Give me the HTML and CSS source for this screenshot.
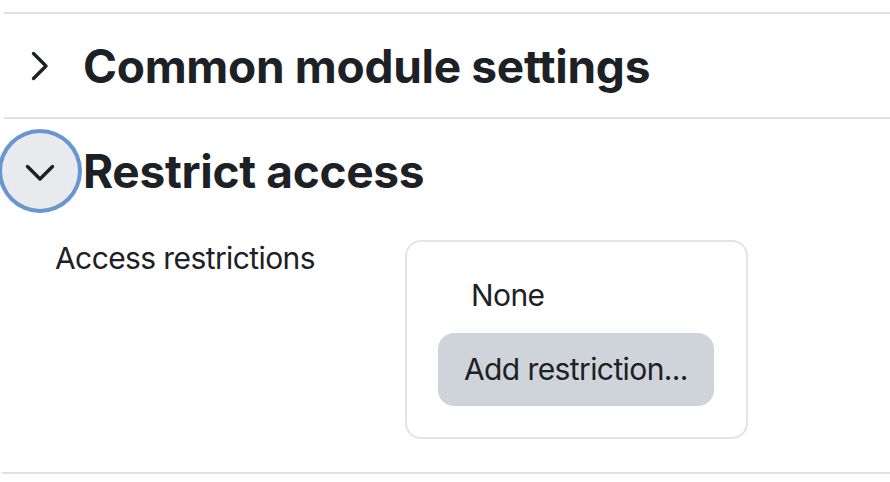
FILE: index.html
```html
<!DOCTYPE html>
<html lang="en">
<head>
<meta charset="utf-8">
<title>Restrict access</title>
<link rel="stylesheet" href="styles.css">
</head>
<body>
<div class="page">
  <div class="divider"></div>
  <div class="sec-head">
    <div class="toggle">
      <svg class="chev" width="18" height="30" viewBox="0 0 18 30" aria-hidden="true">
        <path d="M2.5 2.5 L15 15 L2.5 27.5" fill="none" stroke="#1d2125" stroke-width="3.4" stroke-linecap="round" stroke-linejoin="round"/>
      </svg>
    </div>
    <h3 class="sec-title">Common module settings</h3>
  </div>
  <div class="divider"></div>
  <div class="sec-head">
    <div class="toggle">
      <span class="toggle-btn">
        <svg width="30" height="18" viewBox="0 0 30 18" aria-hidden="true">
          <path d="M2.5 2.5 L15 15 L27.5 2.5" fill="none" stroke="#1d2125" stroke-width="3.4" stroke-linecap="round" stroke-linejoin="round"/>
        </svg>
      </span>
    </div>
    <h3 class="sec-title">Restrict access</h3>
  </div>
  <div class="form-row">
    <div class="form-label">Access restrictions</div>
    <div class="avail-box">
      <div class="avail-none">None</div>
      <button class="add-btn" type="button">Add restriction...</button>
    </div>
  </div>
  <div class="divider divider-bottom"></div>
</div>
</body>
</html>
```

FILE: styles.css
```css
html, body {
  margin: 0;
  padding: 0;
  background: #ffffff;
}

body {
  font-family: Inter, "Noto Sans", "Liberation Sans", sans-serif;
  color: #1d2125;
  font-size: 30px;
  line-height: 45px;
  letter-spacing: -0.6px;
}

.page {
  padding-top: 12px;
  overflow: hidden;
}

.divider {
  height: 2px;
  background: #dee2e6;
  margin-left: 4px;
}

.divider-bottom {
  margin-left: 2px;
}

.sec-head {
  display: flex;
  align-items: center;
  height: 103px;
}

.toggle {
  width: 80px;
  flex: none;
  display: flex;
  justify-content: center;
  align-items: center;
  margin-right: 3px;
}

.chev {
  display: block;
}

.toggle-btn {
  width: 76px;
  height: 76px;
  border-radius: 50%;
  background: #e9eaee;
  box-shadow: 0 0 0 4px #6995d1;
  display: flex;
  justify-content: center;
  align-items: center;
  padding-top: 4px;
  box-sizing: border-box;
}

.toggle-btn svg {
  display: block;
}

.sec-title {
  margin: 0;
  font-size: 46px;
  font-weight: 700;
  line-height: 54px;
  letter-spacing: -0.3px;
  color: #1d2125;
}

.form-row {
  display: flex;
  padding-top: 18px;
  padding-bottom: 33px;
}

.form-label {
  width: 350px;
  padding-left: 55px;
  flex: none;
  margin-top: -4px;
}

.avail-box {
  width: 343px;
  box-sizing: border-box;
  border: 2px solid #e2e4e7;
  border-radius: 16px;
  padding: 31px 32px 31px 31px;
  display: flex;
  flex-direction: column;
  align-items: flex-start;
}

.avail-none {
  padding-left: 33px;
  margin-bottom: 15px;
}

.add-btn {
  font-family: inherit;
  font-size: 30px;
  line-height: 45px;
  letter-spacing: -0.6px;
  color: #1d2125;
  background: #ced4da;
  border: none;
  border-radius: 16px;
  padding: 14px 26px;
  width: 276px;
  text-align: left;
  white-space: nowrap;
}
```
